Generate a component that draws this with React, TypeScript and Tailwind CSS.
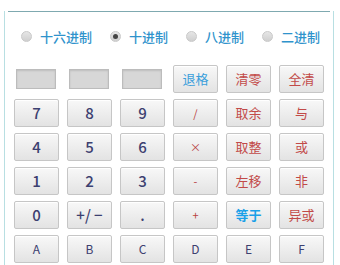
import React from "react";

type Key = { label: string; tone: "num" | "red" | "blue" | "eq" | "hex" | "op" };

const rows: Key[][] = [
    [
        { label: "7", tone: "num" },
        { label: "8", tone: "num" },
        { label: "9", tone: "num" },
        { label: "/", tone: "op" },
        { label: "取余", tone: "red" },
        { label: "与", tone: "red" },
    ],
    [
        { label: "4", tone: "num" },
        { label: "5", tone: "num" },
        { label: "6", tone: "num" },
        { label: "×", tone: "op" },
        { label: "取整", tone: "red" },
        { label: "或", tone: "red" },
    ],
    [
        { label: "1", tone: "num" },
        { label: "2", tone: "num" },
        { label: "3", tone: "num" },
        { label: "-", tone: "op" },
        { label: "左移", tone: "red" },
        { label: "非", tone: "red" },
    ],
    [
        { label: "0", tone: "num" },
        { label: "+/ −", tone: "num" },
        { label: ".", tone: "num" },
        { label: "+", tone: "op" },
        { label: "等于", tone: "eq" },
        { label: "异或", tone: "red" },
    ],
    [
        { label: "A", tone: "hex" },
        { label: "B", tone: "hex" },
        { label: "C", tone: "hex" },
        { label: "D", tone: "hex" },
        { label: "E", tone: "hex" },
        { label: "F", tone: "hex" },
    ],
];

const toneClass: Record<Key["tone"], string> = {
    num: "text-[15px] font-medium text-[#3c4070]",
    hex: "text-[12px] text-[#3c4070]",
    op: "text-[11px] text-[#b8423f]",
    red: "text-[13px] text-[#c24a48]",
    blue: "text-[13px] text-[#3a9fdb]",
    eq: "text-[13px] font-bold text-[#1aa0e8]",
};

function Btn({ k }: { k: Key }) {
    return (
        <div
            className={`flex h-[28px] items-center justify-center rounded-[2px] border border-[#c6c6c6] bg-gradient-to-b from-[#f8f8f8] to-[#e3e3e3] shadow-[inset_0_1px_0_#ffffff] ${toneClass[k.tone]}`}
        >
            {k.label}
        </div>
    );
}

function Radio({ label, checked }: { label: string; checked?: boolean }) {
    return (
        <div className="flex items-center gap-[8px]">
            <span className="flex h-[11px] w-[11px] items-center justify-center rounded-full border border-[#c9c9c9] bg-gradient-to-b from-[#e6e6e6] to-[#cfcfcf]">
                {checked && <span className="h-[5px] w-[5px] rounded-full bg-[#444]" />}
            </span>
            <span className="text-[13px] font-medium leading-none text-[#2f93cc]">{label}</span>
        </div>
    );
}

export default function App() {
    return (
        <div
            className="h-[265px] w-[340px] overflow-hidden bg-white"
            style={{ fontFamily: '"Noto Sans CJK SC", "Noto Sans", sans-serif' }}
        >
            <div className="ml-[4px] h-full w-[330px] border-x border-[#b8dfe2]">
                <div className="mx-[3px] mt-[11px] h-px bg-[#7fa9b0]" />

                {/* number base selector */}
                <div className="mt-[18px] flex items-center gap-[18px] pl-[16px]">
                    <Radio label="十六进制" />
                    <Radio label="十进制" checked />
                    <Radio label="八进制" />
                    <Radio label="二进制" />
                </div>

                <div className="mt-[22px] grid grid-cols-[repeat(6,45px)] gap-x-[8px] gap-y-[6px] pl-[9px]">
                    {[0, 1, 2].map((i) => (
                        <div key={i} className="flex h-[28px] items-center pl-[2px]">
                            <div className="h-[20px] w-[40px] border border-[#bcbcbc] bg-[#d7d7d7] shadow-[inset_0_1px_2px_rgba(0,0,0,0.12)]" />
                        </div>
                    ))}
                    <Btn k={{ label: "退格", tone: "blue" }} />
                    <Btn k={{ label: "清零", tone: "red" }} />
                    <Btn k={{ label: "全清", tone: "red" }} />
                    {rows.flat().map((k, i) => (
                        <Btn key={i} k={k} />
                    ))}
                </div>
            </div>
        </div>
    );
}
